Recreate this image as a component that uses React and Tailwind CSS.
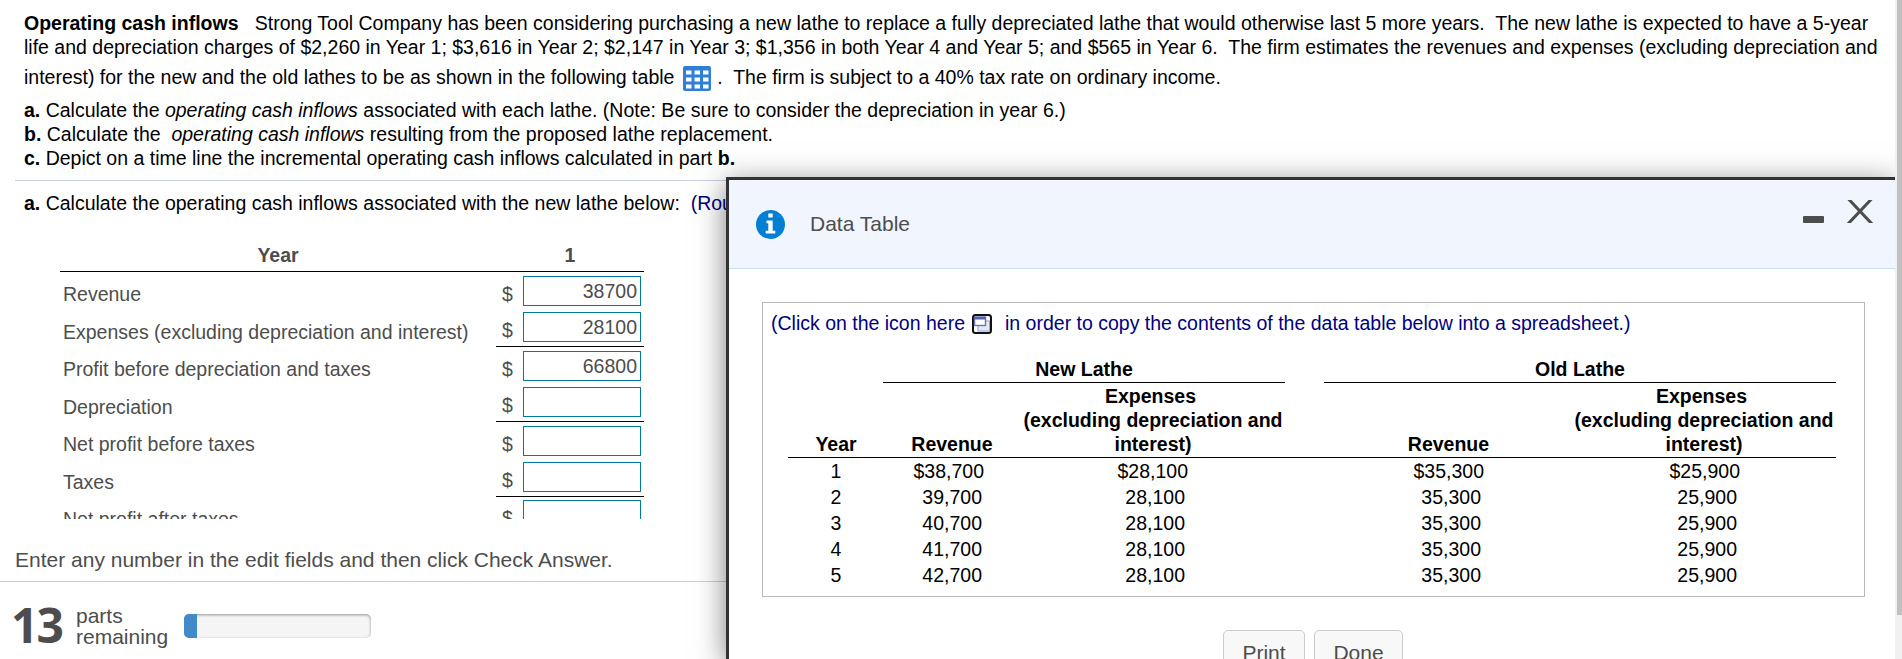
const ROWS = [
  [
    { label: 'Revenue', value: '38700' },
    { label: 'Expenses (excluding depreciation and interest)', value: '28100' },
  ],
  [
    { label: 'Profit before depreciation and taxes', value: '66800' },
    { label: 'Depreciation', value: '' },
  ],
  [
    { label: 'Net profit before taxes', value: '' },
    { label: 'Taxes', value: '' },
  ],
];

const LATHES = [
  ['1', '$38,700', '$28,100', '$35,300', '$25,900'],
  ['2', '39,700', '28,100', '35,300', '25,900'],
  ['3', '40,700', '28,100', '35,300', '25,900'],
  ['4', '41,700', '28,100', '35,300', '25,900'],
  ['5', '42,700', '28,100', '35,300', '25,900'],
];

function TableIcon() {
  return (
    <svg className="inline-block align-top mt-[1px] ml-[3px] mr-[1px]" width="28" height="25" viewBox="0 0 28 25">
      <rect width="28" height="25" rx="2" fill="#2f7ed8" />
      {[4.5, 11.5, 18.5].map((y) =>
        [3, 11.5, 20].map((x) => <rect key={`${x}-${y}`} x={x} y={y} width="5.5" height="4" fill="#fff" />)
      )}
    </svg>
  );
}

function CopyIcon() {
  return (
    <svg className="shrink-0" width="20" height="20" viewBox="0 0 20 20">
      <rect x="1" y="1" width="18" height="18" rx="2.5" fill="#fff" stroke="#111" strokeWidth="2" />
      <rect x="6" y="7" width="11.5" height="10" fill="#e6e9f7" stroke="#98a2d6" />
      <rect x="2.5" y="3.5" width="11" height="8" fill="#fff" stroke="#6a75b8" strokeWidth="1.4" />
      <rect x="2" y="2.5" width="12" height="3" fill="#5563ae" />
    </svg>
  );
}

function Amount({ value }) {
  return (
    <div className="flex h-[30px]">
      <span className="w-[21px] shrink-0 leading-[24px] pt-[6px]">$</span>
      <div className="w-[118px] shrink-0 border border-[#007b9a] pr-[3px] text-right leading-[28px]">{value}</div>
    </div>
  );
}

function Worksheet() {
  return (
    <div className="ml-[60px] w-[584px] h-[276px] overflow-hidden text-[#4d4d4d]">
      <div className="flex h-[29px] border-b border-black font-bold leading-[24px]">
        <div className="w-[436px] text-center">Year</div>
        <div className="w-[148px] text-center">1</div>
      </div>
      {ROWS.map((pair) => (
        <div key={pair[0].label} className="flex h-[75px]">
          <div className="w-[436px] pl-[3px] pt-[10px]">
            {pair.map((row) => (
              <div key={row.label} className="h-[38px] leading-[24px] whitespace-nowrap">{row.label}</div>
            ))}
          </div>
          <div className="w-[148px] flex flex-col gap-[6px] border-b border-black pl-[6px] pt-[4px]">
            {pair.map((row) => (
              <Amount key={row.label} value={row.value} />
            ))}
          </div>
        </div>
      ))}
      <div className="flex">
        <div className="w-[436px] pl-[3px] pt-[10px] leading-[24px]">Net profit after taxes</div>
        <div className="w-[148px] pl-[6px] pt-[3px]">
          <Amount value="" />
        </div>
      </div>
    </div>
  );
}

function LatheTable() {
  return (
    <div className="ml-[25px] w-[1048px] text-black">
      <div className="flex h-[26px] font-bold leading-[24px] text-center">
        <div className="ml-[95px] w-[402px] border-b border-black">New Lathe</div>
        <div className="ml-[39px] w-[512px] border-b border-black">Old Lathe</div>
      </div>
      <div className="flex h-[75px] items-end border-b border-black pb-[1px] font-bold leading-[24px] text-center whitespace-nowrap">
        <div className="w-[96px]">Year</div>
        <div className="w-[136px]">Revenue</div>
        <div className="w-[266px]">
          <div className="pr-[5px]">Expenses</div>
          <div>(excluding depreciation and</div>
          <div>interest)</div>
        </div>
        <div className="w-[282px] pl-[43px]">Revenue</div>
        <div className="w-[268px] pl-[4px]">
          <div className="pr-[5px]">Expenses</div>
          <div>(excluding depreciation and</div>
          <div>interest)</div>
        </div>
      </div>
      {LATHES.map(([year, newRev, newExp, oldRev, oldExp], i) => (
        <div key={year} className="flex h-[26px] leading-[26px]">
          <div className="w-[96px] text-center">{year}</div>
          <div className={`w-[100px] text-right ${i === 0 ? 'pr-0' : 'pr-[2px]'}`}>{newRev}</div>
          <div className={`w-[204px] text-right ${i === 0 ? 'pr-0' : 'pr-[3px]'}`}>{newExp}</div>
          <div className={`w-[296px] text-right ${i === 0 ? 'pr-0' : 'pr-[3px]'}`}>{oldRev}</div>
          <div className={`w-[256px] text-right ${i === 0 ? 'pr-0' : 'pr-[3px]'}`}>{oldExp}</div>
        </div>
      ))}
    </div>
  );
}

function DataDialog() {
  return (
    <div className="absolute left-[726px] top-[177px] w-[1169px] h-[482px] border-l-[3px] border-t-[3px] border-[#333] bg-white shadow-[0_6px_28px_rgba(0,0,0,0.5)]">
      <div className="flex h-[89px] items-center border-b border-[#c5e1f7] bg-[#f1f6fe] pl-[27px] pr-[22px] text-[#4d4d4d]">
        <svg width="29" height="29" viewBox="0 0 29 29">
          <circle cx="14.5" cy="14.5" r="14.5" fill="#007fd4" />
          <path d="M12.3 3.4h4.4v4h-4.4zM10.5 10.5h6.2v10.3h2.6v2.7H9.7v-2.7h2.6v-7.6h-1.8z" fill="#fff" />
        </svg>
        <div className="ml-[25px] leading-[24px] text-[21px]">Data Table</div>
        <div className="ml-auto mt-[-9px] h-[7px] w-[21px] rounded-[1px] bg-[#4d4d4d]" />
        <svg className="ml-[23px] mt-[-26px]" width="26" height="23" viewBox="0 0 26 23">
          <path d="M1.5 -1L25 24M24.5 -1L1 24" stroke="#4d4d4d" strokeWidth="3" />
        </svg>
      </div>
      <div className="ml-[33px] mt-[33px] h-[295px] w-[1103px] border border-[#b9b9b9]">
        <div className="flex items-start pl-[8px] pt-[8px] leading-[24px] text-[#000080]">
          <span className="mr-[7px]">(Click on the icon here</span>
          <div className="pt-[3px]"><CopyIcon /></div>
          <span className="ml-[13px]">in order to copy the contents of the data table below into a spreadsheet.)</span>
        </div>
        <div className="h-[22px]" />
        <LatheTable />
      </div>
      <div className="ml-[494px] mt-[33px] flex h-[29px] gap-[9px] overflow-hidden text-[21px] text-[#4d4d4d]">
        <div className="h-[48px] w-[82px] rounded-[5px] border border-[#ccc] bg-[#f8f8f8] pt-[10px] text-center leading-[24px]">Print</div>
        <div className="h-[48px] w-[89px] rounded-[5px] border border-[#ccc] bg-[#f8f8f8] pt-[10px] text-center leading-[24px]">Done</div>
      </div>
    </div>
  );
}

export default function App() {
  return (
    <div className="relative h-[659px] w-[1902px] overflow-hidden bg-white font-['Liberation_Sans',Arial,sans-serif] text-[19.5px] text-black">
      <div className="pl-[24px] pt-[11px] leading-[24px] whitespace-pre">
        <div><b>Operating cash inflows</b>{'   Strong Tool Company has been considering purchasing a new lathe to replace a fully depreciated lathe that would otherwise last 5 more years.  The new lathe is expected to have a 5-year'}</div>
        <div>{'life and depreciation charges of $2,260 in Year 1; $3,616 in Year 2; $2,147 in Year 3; $1,356 in both Year 4 and Year 5; and $565 in Year 6.  The firm estimates the revenues and expenses (excluding depreciation and'}</div>
        <div className="mt-[6px] h-[33px]">{'interest) for the new and the old lathes to be as shown in the following table '}<TableIcon />{' .  The firm is subject to a 40% tax rate on ordinary income.'}</div>
        <div><b>a.</b> Calculate the <i>operating cash inflows</i> associated with each lathe. (Note: Be sure to consider the depreciation in year 6.)</div>
        <div><b>b.</b>{' Calculate the  '}<i>operating cash inflows</i> resulting from the proposed lathe replacement.</div>
        <div><b>c.</b> Depict on a time line the incremental operating cash inflows calculated in part <b>b.</b></div>
      </div>
      <div className="ml-[15px] mt-[10px] border-t border-[#c8cfdd]" />
      <div className="mt-[10px] pl-[24px] leading-[24px] whitespace-pre">
        <b>a.</b>{' Calculate the operating cash inflows associated with the new lathe below:  '}
        <span className="text-[#000080]">(Round to the nearest dollar.)</span>
      </div>
      <div className="h-[28px]" />
      <Worksheet />
      <div className="mt-[29px] h-[33px] pl-[15px] text-[21px] leading-[24px] text-[#4d4d4d]">
        Enter any number in the edit fields and then click Check Answer.
      </div>
      <div className="flex border-t border-[#c8cdd8] pl-[11px] text-[#4d4d4d]">
        <div className="mt-[13px] w-[65px] font-['Open_Sans',sans-serif] text-[48px] font-bold leading-[60px] tracking-[-2px]">13</div>
        <div className="mt-[23px] w-[108px] text-[21px] leading-[21px]">
          <div>parts</div>
          <div>remaining</div>
        </div>
        <div className="mt-[32px] h-[24px] w-[187px] overflow-hidden rounded-[5px] bg-[#f5f5f5] shadow-[inset_0_1px_3px_rgba(0,0,0,0.4)]">
          <div className="h-full w-[13px] bg-[#428bca]" />
        </div>
      </div>
      <DataDialog />
      <div className="absolute right-0 top-0 h-[659px] w-[7px] bg-[#f1f1f1] pl-[2px]">
        <div className="h-[615px] bg-[#c1c1c1]" />
      </div>
    </div>
  );
}
